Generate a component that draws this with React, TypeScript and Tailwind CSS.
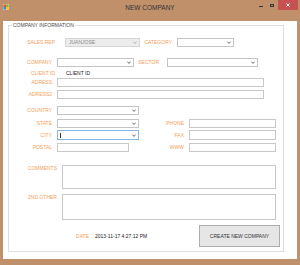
import React from "react";

const F = { fontFamily: '"Liberation Sans", Arial, sans-serif' };

function Arrow({ color = "#555" }: { color?: string }) {
  return (
    <svg width="4" height="3" viewBox="0 0 4 3" className="shrink-0">
      <path d="M0.3 0.6 L2 2.4 L3.7 0.6" fill="none" stroke={color} strokeWidth="0.9" />
    </svg>
  );
}

function Combo({ w, disabled, focused, text }: { w: string; disabled?: boolean; focused?: boolean; text?: string }) {
  const border = focused ? "border-[#86b6e6]" : disabled ? "border-[#d6d6d6]" : "border-[#c4c4c4]";
  const bg = disabled ? "bg-[#ececec]" : "bg-white";
  return (
    <div className={`${w} h-full border ${border} ${bg} flex items-center pl-[2px] pr-[2px]`}>
      {focused && <div className="w-px h-[5px] bg-[#333]" />}
      <span className="flex-1 text-[5px] leading-none text-[#8a8a8a] pl-[1px]">{text}</span>
      <Arrow color={disabled ? "#a8a8a8" : "#555"} />
    </div>
  );
}

function Box({ w }: { w: string }) {
  return <div className={`${w} h-full border border-[#c8c8c8] bg-white`} />;
}

function Label({ w, children, className = "" }: { w: string; children: React.ReactNode; className?: string }) {
  return (
    <div className={`${w} shrink-0 text-right text-[5px] leading-none text-[#f3a05a] ${className}`}>{children}</div>
  );
}

export default function App() {
  return (
    <div className="w-[300px] h-[265px] bg-[#c0906b] flex flex-col" style={F}>
      {/* Title bar */}
      <div className="h-[21px] flex items-start relative">
        <div className="pl-[3px] pt-[4px]">
          <svg width="6" height="6" viewBox="0 0 6 6">
            <rect x="0" y="0" width="6" height="6" fill="#e9c9a9" />
            <rect x="0.5" y="0.5" width="2.5" height="2.5" fill="#e0533d" />
            <rect x="3" y="0.5" width="2.5" height="2.5" fill="#7fba42" />
            <rect x="0.5" y="3" width="2.5" height="2.5" fill="#2f8ee0" />
            <rect x="3" y="3" width="2.5" height="2.5" fill="#f8c21c" />
          </svg>
        </div>
        <div className="flex-1 text-center text-[6.5px] leading-none text-[#333] pt-[4.5px] pl-[36px]">NEW COMPANY</div>
        <div className="flex items-start">
          <div className="w-[12px] h-[10px] flex items-end justify-center pb-[3px]">
            <div className="w-[4px] h-px bg-[#333]" />
          </div>
          <div className="w-[10px] h-[10px] flex items-start justify-center pt-[4px]">
            <div className="w-[4px] h-[3px] border border-[#333] border-t-[1.5px]" />
          </div>
          <div className="w-[20px] h-[10px] bg-[#c75050] flex items-center justify-center ml-[1px] mr-[2px]">
            <svg width="4" height="4" viewBox="0 0 4 4">
              <path d="M0.5 0.5 L3.5 3.5 M3.5 0.5 L0.5 3.5" stroke="#fff" strokeWidth="1" />
            </svg>
          </div>
        </div>
      </div>

      {/* Client area */}
      <div className="mx-[3px] h-[238px] bg-white pl-[5px] pt-[2px]">
        <fieldset className="w-[276px] h-[229px] border border-[#dedede] flex flex-col">
          <legend className="ml-[3px] px-[1px] text-[5px] leading-none text-[#4a4a4a]">COMPANY INFORMATION</legend>

          {/* Row 1 */}
          <div className="mt-[10px] h-[9px] flex items-center">
            <Label w="w-[46px]">SALES REP</Label>
            <div className="ml-[10px] h-full flex">
              <Combo w="w-[75px]" disabled text="JUANJOSE" />
            </div>
            <Label w="w-[32px]">CATEGORY</Label>
            <div className="ml-[5px] h-full flex">
              <Combo w="w-[57px]" />
            </div>
          </div>

          {/* Row 2 */}
          <div className="mt-[11px] h-[9px] flex items-center">
            <Label w="w-[43px]">COMPANY</Label>
            <div className="ml-[5px] h-full flex">
              <Combo w="w-[77px]" />
            </div>
            <Label w="w-[25px]">SECTOR</Label>
            <div className="ml-[8px] h-full flex">
              <Combo w="w-[91px]" />
            </div>
          </div>

          {/* Row 3 */}
          <div className="mt-[3px] h-[6px] flex items-center">
            <Label w="w-[46px]">CLIENT ID</Label>
            <div className="ml-[11px] text-[5px] leading-none text-[#222]">CLIENT ID</div>
          </div>

          {/* Row 4 */}
          <div className="mt-[2px] h-[9px] flex items-center">
            <Label w="w-[43px]">ADRESS</Label>
            <div className="ml-[5px] h-full flex">
              <Box w="w-[207px]" />
            </div>
          </div>

          {/* Row 5 */}
          <div className="mt-[3px] h-[9px] flex items-center">
            <Label w="w-[43px]">ADRESS2</Label>
            <div className="ml-[5px] h-full flex">
              <Box w="w-[207px]" />
            </div>
          </div>

          {/* Row 6 */}
          <div className="mt-[7px] h-[9px] flex items-center">
            <Label w="w-[43px]">COUNTRY</Label>
            <div className="ml-[5px] h-full flex">
              <Combo w="w-[82px]" />
            </div>
          </div>

          {/* Row 7 */}
          <div className="mt-[4px] h-[9px] flex items-center">
            <Label w="w-[43px]">STATE</Label>
            <div className="ml-[5px] h-full flex">
              <Combo w="w-[82px]" />
            </div>
            <Label w="w-[45px]">PHONE</Label>
            <div className="ml-[5px] h-full flex">
              <Box w="w-[87px]" />
            </div>
          </div>

          {/* Row 8 */}
          <div className="mt-[2px] h-[10px] flex items-center">
            <Label w="w-[43px]">CITY</Label>
            <div className="ml-[5px] h-full flex">
              <Combo w="w-[82px]" focused />
            </div>
            <Label w="w-[45px]">FAX</Label>
            <div className="ml-[5px] h-full flex">
              <Box w="w-[87px]" />
            </div>
          </div>

          {/* Row 9 */}
          <div className="mt-[3px] h-[9px] flex items-center">
            <Label w="w-[43px]">POSTAL</Label>
            <div className="ml-[5px] h-full flex">
              <Box w="w-[72px]" />
            </div>
            <Label w="w-[55px]">WWW</Label>
            <div className="ml-[5px] h-full flex">
              <Box w="w-[87px]" />
            </div>
          </div>

          {/* Row 10 */}
          <div className="mt-[13px] h-[24px] flex items-start">
            <Label w="w-[48px]" className="pt-[1px]">COMMENTS</Label>
            <div className="ml-[5px] h-full flex">
              <Box w="w-[214px]" />
            </div>
          </div>

          {/* Row 11 */}
          <div className="mt-[5px] h-[26px] flex items-start">
            <Label w="w-[48px]" className="pt-[1px]">2ND OTHER</Label>
            <div className="ml-[5px] h-full flex">
              <Box w="w-[214px]" />
            </div>
          </div>

          {/* Row 12 */}
          <div className="mt-[5px] h-[22px] flex items-center">
            <Label w="w-[80px]">DATE</Label>
            <div className="ml-[6px] text-[5px] leading-none text-[#222] w-[104px]">2013-11-17 4:27:12 PM</div>
            <div className="w-[81px] h-full border border-[#adadad] bg-[#e6e6e6] flex items-center justify-center text-[5px] leading-none text-[#333]">
              CREATE NEW COMPANY
            </div>
          </div>
        </fieldset>
      </div>
    </div>
  );
}
